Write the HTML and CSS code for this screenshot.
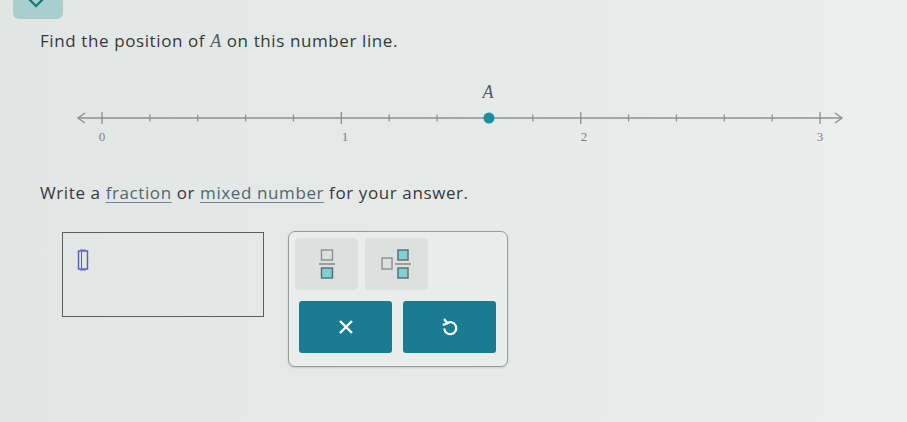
FILE: index.html
```html
<!DOCTYPE html>
<html lang="en">
<head>
    <meta charset="UTF-8">
    <meta name="viewport" content="width=device-width, initial-scale=1.0">
    <title>Number line</title>
    <link rel="stylesheet" href="styles.css">
</head>
<body>
    <div class="topbar">
        <div class="tab">
            <svg width="16" height="9" viewBox="0 0 16 9"><path d="M1 0 L8 7 L15 0" fill="none" stroke="#1b7c84" stroke-width="2.4"/></svg>
        </div>
    </div>

    <p class="question">Find the position of <span class="var">A</span> on this number line.</p>

    <svg class="numberline" width="790" height="66" viewBox="0 0 790 66">
        <g stroke="#8c9090" stroke-width="1.4" fill="none">
            <line x1="8" y1="38" x2="772" y2="38"/>
            <path d="M15 33 L8 38 L15 43"/>
            <path d="M765 33 L772 38 L765 43"/>
        </g>
        <g id="ticks" stroke="#8c9090" stroke-width="1.3"></g>
        <g class="labels" font-family="Liberation Serif, serif" font-size="13" fill="#7a7e7e" text-anchor="middle">
            <text x="32" y="61">0</text>
            <text x="275" y="61">1</text>
            <text x="514" y="61">2</text>
            <text x="750" y="61">3</text>
        </g>
        <text x="418" y="18" font-family="Liberation Serif, serif" font-style="italic" font-size="18" fill="#555a5b" text-anchor="middle">A</text>
        <circle cx="419" cy="38" r="5.5" fill="#1a8fa0"/>
    </svg>

    <p class="instructions">Write a <a href="#">fraction</a> or <a href="#">mixed number</a> for your answer.</p>

    <div class="answer">
        <div class="answer-box">
            <svg class="cursor" width="12" height="22" viewBox="0 0 12 22">
                <rect x="1.5" y="2" width="9" height="18" fill="none" stroke="#5858c0" stroke-width="1.4"/>
                <line x1="4.5" y1="3" x2="4.5" y2="19" stroke="#5858c0" stroke-width="1"/>
                <line x1="3" y1="1" x2="9" y2="1" stroke="#5858c0" stroke-width="1"/>
                <line x1="3" y1="21" x2="9" y2="21" stroke="#5858c0" stroke-width="1"/>
            </svg>
        </div>

        <div class="keypad">
            <div class="keypad-row">
                <button class="key">
                    <svg width="18" height="30" viewBox="0 0 18 30">
                        <rect x="3.5" y="1" width="11" height="10" fill="none" stroke="#8a8e8e" stroke-width="1.4"/>
                        <line x1="1" y1="15" x2="17" y2="15" stroke="#8a8e8e" stroke-width="1.6"/>
                        <rect x="3.5" y="19" width="11" height="10" fill="#7fd0d6" stroke="#5a6a6c" stroke-width="1.4"/>
                    </svg>
                </button>
                <button class="key">
                    <svg width="32" height="30" viewBox="0 0 32 30">
                        <rect x="1" y="9" width="10" height="11" fill="none" stroke="#8a8e8e" stroke-width="1.4"/>
                        <rect x="17" y="1" width="10" height="10" fill="#7fd0d6" stroke="#5a6a6c" stroke-width="1.4"/>
                        <line x1="14" y1="15" x2="30" y2="15" stroke="#8a8e8e" stroke-width="1.6"/>
                        <rect x="17" y="19" width="10" height="10" fill="#7fd0d6" stroke="#5a6a6c" stroke-width="1.4"/>
                    </svg>
                </button>
            </div>
            <div class="keypad-row actions">
                <button class="action">
                    <svg width="16" height="16" viewBox="0 0 16 16"><path d="M2 2 L14 14 M14 2 L2 14" stroke="#fff" stroke-width="2.4"/></svg>
                </button>
                <button class="action">
                    <svg width="18" height="20" viewBox="0 0 18 20">
                        <path d="M5.5 6.5 A6 6 0 1 1 3.3 11.5" fill="none" stroke="#fff" stroke-width="2.2"/>
                        <path d="M3 2 L6.5 6.3 L1.8 8" fill="none" stroke="#fff" stroke-width="2.2"/>
                    </svg>
                </button>
            </div>
        </div>
    </div>

    <script>
        // tick marks every fifth of a unit, taller ones on whole numbers
        var ticks = document.getElementById('ticks');
        for (var k = 0; k <= 15; k++) {
            var x = 32 + k * 47.87;
            var h = k % 5 === 0 ? 6 : 3.5;
            var l = document.createElementNS('http://www.w3.org/2000/svg', 'line');
            l.setAttribute('x1', x);
            l.setAttribute('x2', x);
            l.setAttribute('y1', 38 - h);
            l.setAttribute('y2', 38 + h);
            ticks.appendChild(l);
        }
    </script>
</body>
</html>
```

FILE: styles.css
```css
body {
    margin: 0;
    background: linear-gradient(90deg, #e2e7e5 0%, #e6ebe9 60%, #ebefed 100%);
    min-height: 422px;
    font-family: "Open Sans", Arial, sans-serif;
    color: #35393b;
}
.topbar {
    height: 19px;
}
.tab {
    margin-left: 13px;
    width: 50px;
    height: 19px;
    background: #a9cfcf;
    border-radius: 0 0 6px 6px;
    display: flex;
    justify-content: center;
}
.tab svg {
    margin-top: -1px;
    margin-left: -4px;
}
.question {
    margin: 11px 0 0 40px;
    font-size: 17px;
    letter-spacing: 0.6px;
    line-height: 22px;
}
.var {
    font-family: "Liberation Serif", serif;
    font-style: italic;
    font-size: 18px;
    color: #4b5d66;
}
.numberline {
    display: block;
    margin: 28px 0 0 70px;
}
.instructions {
    margin: 36px 0 0 40px;
    font-size: 17px;
    letter-spacing: 0.6px;
    line-height: 22px;
}
.instructions a {
    color: #4e6670;
    text-decoration: underline;
    text-decoration-color: #6a8a96;
    text-underline-offset: 3px;
}
.answer {
    display: flex;
    align-items: flex-start;
    margin: 27px 0 0 62px;
    gap: 24px;
}
.answer-box {
    width: 200px;
    height: 83px;
    border: 1px solid #5b5f60;
    margin-top: 1px;
}
.cursor {
    display: block;
    margin: 16px 0 0 14px;
}
.keypad {
    width: 206px;
    height: 120px;
    padding: 6px 6px 8px 6px;
    border: 1px solid #979b9b;
    border-radius: 7px;
    background: #e9edeb;
    box-shadow: 0 1px 2px rgba(0, 0, 0, 0.12);
}
.keypad-row {
    display: flex;
    gap: 7px;
}
.key {
    width: 63px;
    height: 52px;
    border: none;
    border-radius: 4px;
    background: #dce1e0;
    display: flex;
    align-items: center;
    justify-content: center;
    padding: 0;
}
.actions {
    margin: 11px 0 0 4px;
    gap: 11px;
}
.action {
    width: 93px;
    height: 52px;
    border: none;
    border-radius: 3px;
    background: #197c93;
    display: flex;
    align-items: center;
    justify-content: center;
    padding: 0;
}
```
